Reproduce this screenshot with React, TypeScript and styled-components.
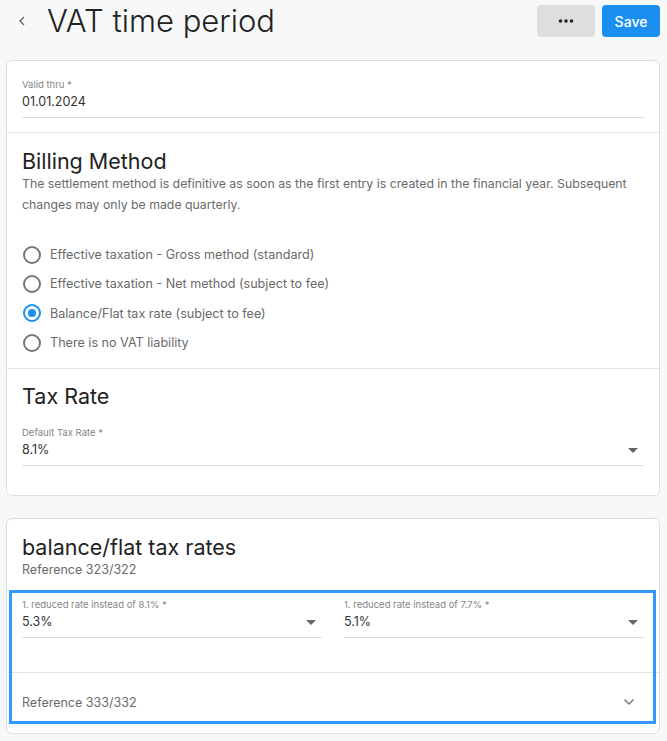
import styled, { createGlobalStyle } from "styled-components";

const GlobalStyle = createGlobalStyle`
  html, body {
    margin: 0;
    padding: 0;
    background: #f7f8f9;
    font-family: Inter, "Noto Sans", sans-serif;
    color: #333;
  }
  * {
    box-sizing: border-box;
  }
`;

const Page = styled.div`
  padding: 0 7px 8px 6px;
`;

const Header = styled.div`
  display: flex;
  align-items: center;
  height: 42px;
  padding-left: 9px;
  margin-bottom: 18px;
`;

const BackButton = styled.button`
  display: flex;
  align-items: center;
  justify-content: center;
  width: 14px;
  height: 24px;
  padding: 0;
  border: none;
  background: transparent;
  cursor: pointer;
`;

const Title = styled.h1`
  flex: 1;
  margin: 0 0 0 18px;
  font-size: 31px;
  font-weight: 300;
  line-height: 36px;
  color: #222;
`;

const Actions = styled.div`
  display: flex;
  gap: 7px;
`;

const ActionButton = styled.button<{ $primary?: boolean }>`
  display: flex;
  align-items: center;
  justify-content: center;
  width: 58px;
  height: 32px;
  border: none;
  border-radius: 4px;
  font-family: Inter, sans-serif;
  font-size: 14px;
  font-weight: 500;
  color: ${(p) => (p.$primary ? "#fff" : "#222")};
  background: ${(p) => (p.$primary ? "#1b8ff0" : "#dedede")};
  cursor: pointer;
`;

const Card = styled.div`
  background: #fff;
  border: 1px solid #dedede;
  border-radius: 6px;
  margin-bottom: 22px;
`;

const Section = styled.div<{ $pt?: number; $pb?: number }>`
  padding: ${(p) => p.$pt ?? 15}px 15px ${(p) => p.$pb ?? 0}px;
  & + & {
    border-top: 1px solid #e3e3e3;
  }
`;

const Heading = styled.h2`
  margin: 0;
  font-size: 21.5px;
  font-weight: 400;
  line-height: 24px;
  color: #222;
`;

const Description = styled.p<{ $size?: number }>`
  margin: 0;
  font-size: ${(p) => p.$size ?? 12.3}px;
  line-height: 21px;
  color: #6a6a6a;
`;

const Field = styled.div<{ $mt?: number }>`
  margin-top: ${(p) => p.$mt ?? 0}px;
  padding-bottom: 5px;
  border-bottom: 1px solid #dcdcdc;
`;

const FieldLabel = styled.div`
  font-size: 9.5px;
  line-height: 14px;
  color: #858585;
`;

const FieldValue = styled.div`
  display: flex;
  align-items: center;
  justify-content: space-between;
  font-size: 12.5px;
  line-height: 20px;
  color: #333;
`;

const Caret = styled.span`
  width: 0;
  height: 0;
  margin-right: 6px;
  border-left: 5px solid transparent;
  border-right: 5px solid transparent;
  border-top: 5px solid #666;
`;

const RadioList = styled.div`
  margin-top: 25px;
  display: flex;
  flex-direction: column;
`;

const RadioRow = styled.label`
  display: flex;
  align-items: center;
  gap: 9px;
  height: 29.3px;
  padding-left: 1px;
  font-size: 12.6px;
  color: #6a6a6a;
  cursor: pointer;
`;

const RadioCircle = styled.span<{ $checked?: boolean }>`
  display: flex;
  align-items: center;
  justify-content: center;
  width: 18px;
  height: 18px;
  border-radius: 50%;
  border: 2px solid ${(p) => (p.$checked ? "#1b8ff0" : "#777")};
  &::after {
    content: "";
    display: ${(p) => (p.$checked ? "block" : "none")};
    width: 8px;
    height: 8px;
    border-radius: 50%;
    background: #1b8ff0;
  }
`;

const FocusGroup = styled.div`
  position: relative;
  &::after {
    content: "";
    position: absolute;
    top: 10px;
    left: 2px;
    right: 3px;
    bottom: 9px;
    border: 3px solid #3399ff;
    pointer-events: none;
  }
`;

const FieldGrid = styled.div`
  display: grid;
  grid-template-columns: 1fr 1fr;
  column-gap: 22px;
  padding: 18px 15px 34px;
`;

const AccordionRow = styled.div`
  display: flex;
  align-items: center;
  justify-content: space-between;
  height: 61px;
  padding: 0 24px 2px 15px;
  border-top: 1px solid #e3e3e3;
  font-size: 12.5px;
  color: #6a6a6a;
`;

const options = [
  { label: "Effective taxation - Gross method (standard)", checked: false },
  { label: "Effective taxation - Net method (subject to fee)", checked: false },
  { label: "Balance/Flat tax rate (subject to fee)", checked: true },
  { label: "There is no VAT liability", checked: false },
];

const App = () => {
  return (
    <Page>
      <GlobalStyle />
      <Header>
        <BackButton aria-label="Back">
          <svg width="8" height="12" viewBox="0 0 8 12">
            <polyline
              points="6,2 2,6 6,10"
              fill="none"
              stroke="#666"
              strokeWidth="1.4"
            />
          </svg>
        </BackButton>
        <Title>VAT time period</Title>
        <Actions>
          <ActionButton aria-label="More">
            <svg width="16" height="4" viewBox="0 0 16 4">
              <circle cx="2.5" cy="2" r="1.8" fill="#222" />
              <circle cx="8" cy="2" r="1.8" fill="#222" />
              <circle cx="13.5" cy="2" r="1.8" fill="#222" />
            </svg>
          </ActionButton>
          <ActionButton $primary>Save</ActionButton>
        </Actions>
      </Header>

      <Card>
        <Section $pt={17} $pb={14}>
          <Field>
            <FieldLabel>Valid thru *</FieldLabel>
            <FieldValue>01.01.2024</FieldValue>
          </Field>
        </Section>
        <Section $pt={16} $pb={11}>
          <Heading>Billing Method</Heading>
          <Description>
            The settlement method is definitive as soon as the first entry is
            created in the financial year. Subsequent changes may only be made
            quarterly.
          </Description>
          <RadioList>
            {options.map((o) => (
              <RadioRow key={o.label}>
                <RadioCircle $checked={o.checked} />
                {o.label}
              </RadioRow>
            ))}
          </RadioList>
        </Section>
        <Section $pt={15} $pb={29}>
          <Heading>Tax Rate</Heading>
          <Field $mt={18}>
            <FieldLabel>Default Tax Rate *</FieldLabel>
            <FieldValue>
              8.1%
              <Caret />
            </FieldValue>
          </Field>
        </Section>
      </Card>

      <Card>
        <Section $pt={16}>
          <Heading>balance/flat tax rates</Heading>
          <Description $size={12.5}>Reference 323/322</Description>
        </Section>
        <FocusGroup>
          <FieldGrid>
            <Field>
              <FieldLabel>1. reduced rate instead of 8.1% *</FieldLabel>
              <FieldValue>
                5.3%
                <Caret />
              </FieldValue>
            </Field>
            <Field>
              <FieldLabel>1. reduced rate instead of 7.7% *</FieldLabel>
              <FieldValue>
                5.1%
                <Caret />
              </FieldValue>
            </Field>
          </FieldGrid>
          <AccordionRow>
            Reference 333/332
            <svg width="12" height="8" viewBox="0 0 12 8">
              <polyline
                points="1.5,1.5 6,6 10.5,1.5"
                fill="none"
                stroke="#777"
                strokeWidth="1.5"
              />
            </svg>
          </AccordionRow>
        </FocusGroup>
      </Card>
    </Page>
  );
};

export default App;
